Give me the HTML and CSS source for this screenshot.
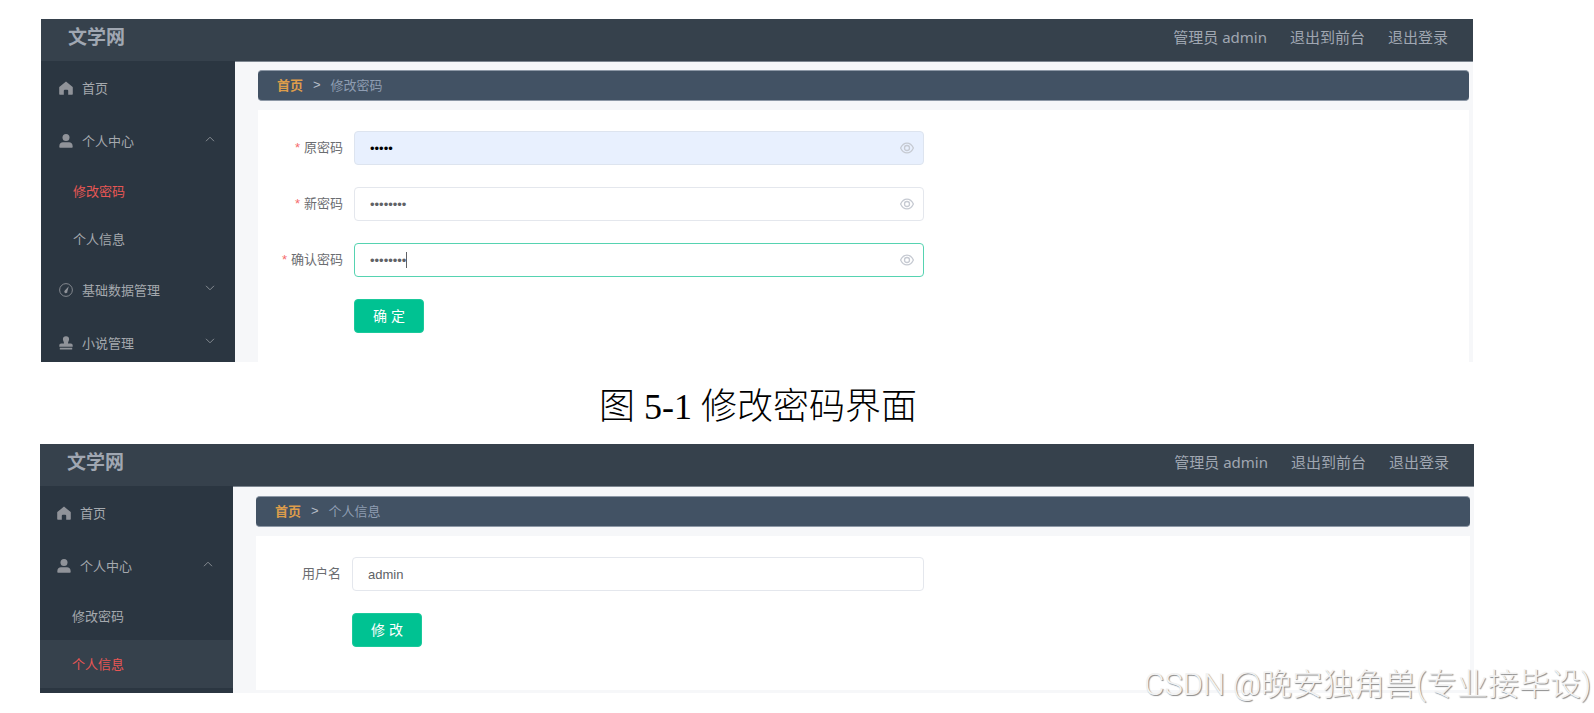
FILE: index.html
```
<!DOCTYPE html>
<html lang="zh-CN">
<head>
  <meta charset="UTF-8">
  <meta name="viewport" content="width=device-width, initial-scale=1.0">
  <title>文学网</title>
  <link rel="stylesheet" href="styles.css">
</head>
<body>

  <svg class="icon-defs" width="0" height="0">
    <symbol id="icon-home" viewBox="0 0 14 14">
      <path fill="currentColor" d="M7 .6 13.4 5.8a1 1 0 0 1 .4.8V13a.7.7 0 0 1-.7.7H9.2V9.8a1 1 0 0 0-1-1H5.8a1 1 0 0 0-1 1v3.900H.9a.7.7 0 0 1-.7-.7V6.600a1 1 0 0 1 .4-.8z"/>
    </symbol>
    <symbol id="icon-user" viewBox="0 0 14 14">
      <circle fill="currentColor" cx="7" cy="3.600" r="3.500"/>
      <path fill="currentColor" d="M.3 12.500c0-3 1.700-4.200 3.700-4.200h6c2 0 3.700 1.200 3.700 4.200 0 .8-.3 1.300-1 1.300H1.300c-.7 0-1-.5-1-1.300z"/>
    </symbol>
    <symbol id="icon-compass" viewBox="0 0 16 16">
      <circle cx="8" cy="8" r="7.300" fill="none" stroke="currentColor"/>
      <path fill="currentColor" d="M11.200 3.800 9.600 9.400A1.800 1.800 0 1 1 6.900 8.300z"/>
    </symbol>
    <symbol id="icon-stamp" viewBox="0 0 14 14">
      <path fill="currentColor" d="M7 .2a3.100 3.100 0 0 1 3.100 3.100c0 1.600-1.100 2.300-1.100 4.200h2.800c1.200 0 1.900.8 1.900 2v1.300H.3V9.500c0-1.200.7-2 1.900-2H5c0-1.900-1.100-2.600-1.100-4.200A3.100 3.100 0 0 1 7 .2zM.8 11.800h12.400v1.800H.8z"/>
    </symbol>
    <symbol id="icon-down" viewBox="0 0 10 6">
      <path fill="none" stroke="currentColor" d="m1 .8 4 4 4-4"/>
    </symbol>
    <symbol id="icon-up" viewBox="0 0 10 6">
      <path fill="none" stroke="currentColor" d="m1 5.200 4-4 4 4"/>
    </symbol>
    <symbol id="icon-eye" viewBox="0 0 14 12">
      <path fill="none" stroke="currentColor" stroke-width="1.300" d="M.6 6C2 3 4.200 1.100 7 1.100S12 3 13.400 6C12 9 9.800 10.900 7 10.900S2 9 .6 6z"/>
      <circle cx="7" cy="6" r="2.500" fill="none" stroke="currentColor" stroke-width="1.300"/>
    </symbol>
  </svg>

  <section class="app app-password">
    <header class="header">
      <h1>文学网</h1>
      <nav class="header-nav">
        <span>管理员 admin</span>
        <a href="#">退出到前台</a>
        <a href="#">退出登录</a>
      </nav>
    </header>
    <div class="app-body">
      <nav class="sidebar">
        <a class="menu-item" href="#"><svg class="icon"><use href="#icon-home"/></svg>首页</a>
        <a class="menu-item" href="#"><svg class="icon"><use href="#icon-user"/></svg>个人中心<svg class="arrow"><use href="#icon-up"/></svg></a>
        <a class="sub-item current" href="#">修改密码</a>
        <a class="sub-item" href="#">个人信息</a>
        <a class="menu-item" href="#"><svg class="icon"><use href="#icon-compass"/></svg>基础数据管理<svg class="arrow"><use href="#icon-down"/></svg></a>
        <a class="menu-item" href="#"><svg class="icon"><use href="#icon-stamp"/></svg>小说管理<svg class="arrow"><use href="#icon-down"/></svg></a>
      </nav>
      <main class="content">
        <div class="breadcrumb">
          <a href="#">首页</a><span class="separator">&gt;</span><span>修改密码</span>
        </div>
        <div class="card">
          <form class="form">
            <div class="form-row">
              <label class="required" for="oldPassword">原密码</label>
              <div class="field">
                <input class="autofilled" type="password" id="oldPassword" value="admin">
                <svg class="eye"><use href="#icon-eye"/></svg>
              </div>
            </div>
            <div class="form-row">
              <label class="required" for="newPassword">新密码</label>
              <div class="field">
                <input type="password" id="newPassword" value="admin123">
                <svg class="eye"><use href="#icon-eye"/></svg>
              </div>
            </div>
            <div class="form-row">
              <label class="required" for="confirmPassword">确认密码</label>
              <div class="field">
                <input class="focused" type="password" id="confirmPassword" value="admin123">
                <span class="caret"></span>
                <svg class="eye"><use href="#icon-eye"/></svg>
              </div>
            </div>
            <div class="form-actions"><button type="button">确 定</button></div>
          </form>
        </div>
      </main>
    </div>
  </section>

  <p class="caption">图 5-1 修改密码界面</p>

  <section class="app app-profile">
    <header class="header">
      <h1>文学网</h1>
      <nav class="header-nav">
        <span>管理员 admin</span>
        <a href="#">退出到前台</a>
        <a href="#">退出登录</a>
      </nav>
    </header>
    <div class="app-body">
      <nav class="sidebar">
        <a class="menu-item" href="#"><svg class="icon"><use href="#icon-home"/></svg>首页</a>
        <a class="menu-item" href="#"><svg class="icon"><use href="#icon-user"/></svg>个人中心<svg class="arrow"><use href="#icon-up"/></svg></a>
        <a class="sub-item" href="#">修改密码</a>
        <a class="sub-item current hover" href="#">个人信息</a>
      </nav>
      <main class="content">
        <div class="breadcrumb">
          <a href="#">首页</a><span class="separator">&gt;</span><span>个人信息</span>
        </div>
        <div class="card">
          <form class="form">
            <div class="form-row">
              <label for="username">用户名</label>
              <div class="field">
                <input type="text" id="username" value="admin">
              </div>
            </div>
            <div class="form-actions"><button type="button">修 改</button></div>
          </form>
        </div>
      </main>
    </div>
  </section>

  <div class="watermark">CSDN @晚安独角兽(专业接毕设)</div>

</body>
</html>
```

FILE: styles.css
```
* {
  box-sizing: border-box;
}
body {
  margin: 0;
  padding: 19px 0 20px;
  background: #fff;
  font-family: "Liberation Sans", "Noto Sans CJK SC", sans-serif;
  font-size: 13px;
  color: #6b6d71;
  position: relative;
}
a {
  color: inherit;
  text-decoration: none;
}
.icon-defs {
  position: absolute;
}
.app {
  margin: 0 121px 0 41px;
}
.app-profile {
  margin: 0 120px 0 40px;
}

/* header */
.header {
  display: flex;
  justify-content: space-between;
  align-items: center;
  height: 42px;
  padding: 0 25px 5px 27px;
  background: #36414c;
  color: #a0a7b2;
}
.header h1 {
  margin: 0;
  font-size: 19px;
  line-height: 28px;
}
.header-nav {
  display: flex;
  gap: 23px;
  padding-bottom: 2px;
  font-family: "Noto Sans", "Noto Sans CJK SC", sans-serif;
  font-size: 15px;
  line-height: 22px;
}

/* sidebar */
.app-body {
  display: flex;
  height: 301px;
  overflow: hidden;
}
.app-profile .app-body {
  height: 207px;
}
.sidebar {
  flex: 0 0 194px;
  background: #2b3641;
  color: #a5a9ae;
}
.app-profile .sidebar {
  flex-basis: 193px;
}
.menu-item {
  display: flex;
  align-items: center;
  height: 53px;
  padding: 0 20px 0 18px;
}
.app-profile .menu-item {
  padding-left: 17px;
}
.icon {
  width: 14px;
  height: 14px;
  margin-right: 9px;
  color: #909399;
}
.arrow {
  width: 10px;
  height: 6px;
  margin-left: auto;
  margin-bottom: 4px;
  color: #858b91;
}
.sub-item {
  display: flex;
  align-items: center;
  height: 48px;
  padding: 0 0 2px 32px;
}
.sub-item.current {
  color: #e85654;
}
.sub-item.hover {
  background: #36414c;
}

/* content */
.content {
  flex: 1;
  display: flex;
  flex-direction: column;
  padding: 8px 4px 0 23px;
  border-top: 1px solid #7d8690;
  background: #f6f7f9;
}
.app-profile .content {
  padding-top: 9px;
  padding-bottom: 3px;
}
.breadcrumb {
  display: flex;
  align-items: center;
  gap: 10px;
  height: 31px;
  padding: 0 19px 2px;
  margin-bottom: 9px;
  border: 1px solid #8d98a6;
  border-width: 1px 0;
  border-radius: 4px;
  background: #425264;
  color: #8e9db2;
}
.breadcrumb a {
  color: #dd9d4b;
  font-weight: bold;
}
.separator {
  color: #b7bec8;
}
.card {
  flex: 1;
  padding-top: 21px;
  background: #fff;
}

/* form */
.form {
  width: 55%;
}
.form-row {
  display: flex;
  margin-bottom: 22px;
}
.form-row label {
  flex: 0 0 96px;
  padding-right: 11px;
  line-height: 34px;
  text-align: right;
}
.required::before {
  content: "*";
  margin-right: 4px;
  color: #f56c6c;
}
.field {
  flex: 1;
  position: relative;
}
.field input {
  display: block;
  width: 100%;
  height: 34px;
  padding: 0 15px;
  border: 1px solid #e4e7ed;
  border-radius: 4px;
  outline: none;
  background: #fff;
  color: #606266;
  font-family: "Liberation Sans", "Noto Sans CJK SC", sans-serif;
  font-size: 13px;
}
.field .autofilled {
  background: #e8f0fe;
  border-color: #dde4ef;
  color: #000;
}
.field .focused {
  border-color: #56d3b1;
}
.caret {
  position: absolute;
  top: 9px;
  left: 52px;
  width: 1px;
  height: 16px;
  background: #606266;
}
.eye {
  position: absolute;
  top: 11px;
  right: 10px;
  width: 14px;
  height: 12px;
  color: #c6cad2;
}
.form-actions {
  padding-left: 96px;
}
button {
  height: 34px;
  width: 70px;
  padding: 0 0 3px;
  border: 1px solid #1bc99b;
  border-radius: 4px;
  background: #00c292;
  color: #fff;
  font-family: "Liberation Sans", "Noto Sans CJK SC", sans-serif;
  font-size: 14px;
}

.caption {
  margin: 0 119px 0 41px;
  padding-top: 8px;
  color: #000;
  font-family: "Liberation Serif", "Noto Sans CJK SC", serif;
  font-size: 36px;
  font-weight: 300;
  line-height: 74px;
  text-align: center;
}

.watermark {
  position: absolute;
  right: 3px;
  bottom: 6px;
  color: #f2f2f2;
  font-family: Roboto, "Noto Sans CJK SC", sans-serif;
  font-size: 31px;
  font-weight: 300;
  line-height: 44px;
  text-shadow: 1px 1px 1px #888;
}
```
